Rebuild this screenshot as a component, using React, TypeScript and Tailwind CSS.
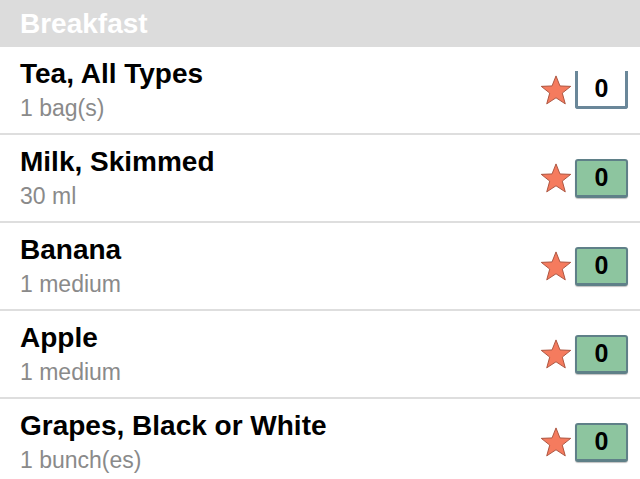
import React from "react";

type Item = { name: string; amount: string; active?: boolean };

const items: Item[] = [
  { name: "Tea, All Types", amount: "1 bag(s)", active: true },
  { name: "Milk, Skimmed", amount: "30 ml" },
  { name: "Banana", amount: "1 medium" },
  { name: "Apple", amount: "1 medium" },
  { name: "Grapes, Black or White", amount: "1 bunch(es)" },
];

function Star() {
  return (
    <svg width="32" height="30" viewBox="0 0 30 28" className="shrink-0">
      <polygon
        points="15,0.8 18.7,10.2 28.8,10.6 20.9,16.9 23.7,27 15,21.3 6.3,27 9.1,16.9 1.2,10.6 11.3,10.2"
        fill="#f57b5e"
        stroke="#a9523d"
        strokeWidth="0.9"
        strokeLinejoin="round"
      />
    </svg>
  );
}

function Counter({ active }: { active?: boolean }) {
  if (active) {
    return (
      <div className="w-[53px] h-[38px] flex items-center justify-center bg-white border-x-[3px] border-b-[3px] border-[#6a8799] rounded-b-[3px] text-[25px] font-bold text-black leading-none">
        0
      </div>
    );
  }
  return (
    <div className="w-[53px] h-[39px] flex items-center justify-center bg-[#8dc59f] border-[2px] border-b-[3px] border-[#5f8088] rounded-[3px] shadow-[0_1px_1px_rgba(0,0,0,0.25)] text-[25px] font-bold text-black leading-none">
      0
    </div>
  );
}

export default function App() {
  return (
    <div
      className="w-[640px] h-[479px] overflow-hidden bg-white"
      style={{ fontFamily: '"Liberation Sans", Arial, sans-serif' }}
    >
      <div className="h-[47px] bg-[#dcdcdc] flex items-center px-5">
        <span className="text-[28px] font-bold text-white leading-none">Breakfast</span>
      </div>
      {items.map((it) => (
        <div
          key={it.name}
          className="h-[88px] border-b-2 border-[#dedede] flex items-center pl-5 pr-[12px]"
        >
          <div className="flex-1 flex flex-col">
            <span className="text-[28px] font-bold text-black leading-[32px]">{it.name}</span>
            <span className="text-[23px] text-[#8a8a8a] leading-[28px] mt-[4px]">{it.amount}</span>
          </div>
          <div className="flex items-center gap-[3px]">
            <Star />
            <Counter active={it.active} />
          </div>
        </div>
      ))}
    </div>
  );
}
